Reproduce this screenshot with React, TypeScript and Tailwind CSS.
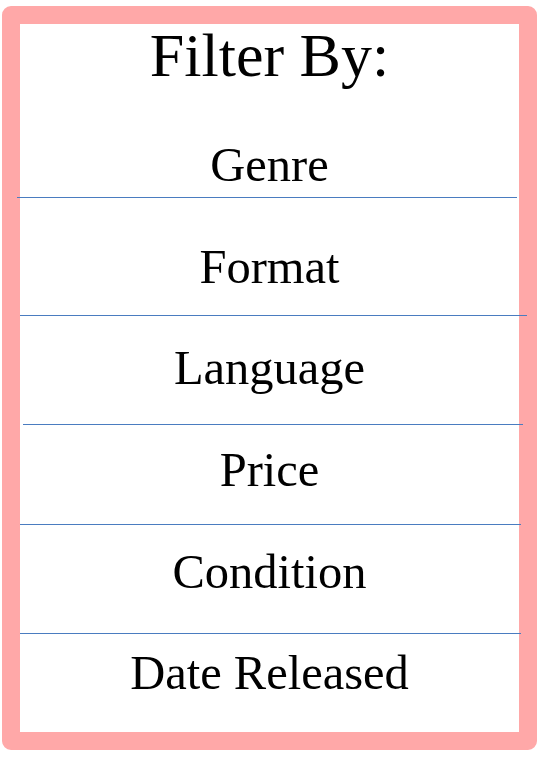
import React from 'react';

type FilterRow = {
  label: string;
  top: string;
  bottom: string;
  rule: string;
};

// spacing is uneven in the original, so each row carries its own gaps
const rows: FilterRow[] = [
  { label: 'Genre', top: 'pt-[53px]', bottom: 'pb-[8px]', rule: 'ml-[-3px] w-[500px]' },
  { label: 'Format', top: 'pt-[45px]', bottom: 'pb-[24px]', rule: 'ml-0 w-[507px]' },
  { label: 'Language', top: 'pt-[28px]', bottom: 'pb-[32px]', rule: 'ml-[3px] w-[500px]' },
  { label: 'Price', top: 'pt-[21px]', bottom: 'pb-[30px]', rule: 'ml-0 w-[501px]' },
  { label: 'Condition', top: 'pt-[23px]', bottom: 'pb-[37px]', rule: 'ml-0 w-[501px]' },
];

export default function App() {
  return (
    <div className="w-[544px] h-[757px] bg-white pt-[6px] pl-[2px]">
      <div className="w-[535px] h-[744px] border-[18px] border-[#ffa8a8] rounded-[9px] bg-white font-['Liberation_Serif',serif] text-black">
        <h1 className="h-[64px] text-center text-[62px] leading-[62px] font-normal">Filter By:</h1>

        {rows.map((row) => (
          <div key={row.label}>
            <div className={`${row.top} ${row.bottom}`}>
              <p className="text-center text-[48.5px] leading-[48px]">{row.label}</p>
            </div>
            <div className={`h-px bg-[#4a7cc0] ${row.rule}`} />
          </div>
        ))}

        <div className="pt-[15px]">
          <p className="text-center text-[48.5px] leading-[48px]">Date Released</p>
        </div>
      </div>
    </div>
  );
}
